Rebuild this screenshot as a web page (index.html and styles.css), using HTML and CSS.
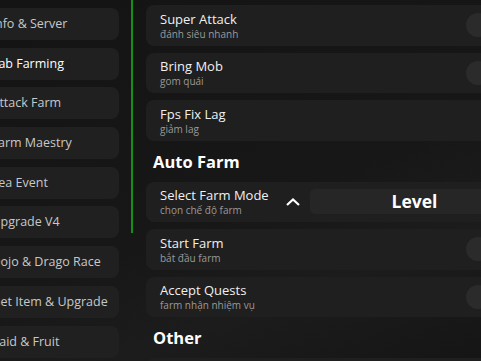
FILE: index.html
```html
<!DOCTYPE html>
<html lang="vi">
<head>
    <meta charset="UTF-8">
    <meta name="viewport" content="width=device-width, initial-scale=1.0">
    <title>Farm Hub</title>
    <link rel="stylesheet" href="styles.css">
</head>
<body>
    <div class="window">
        <div class="sidebar">
            <div class="tab">Info &amp; Server</div>
            <div class="tab active">Tab Farming</div>
            <div class="tab">Attack Farm</div>
            <div class="tab">Farm Maestry</div>
            <div class="tab">Sea Event</div>
            <div class="tab">Upgrade V4</div>
            <div class="tab">Dojo &amp; Drago Race</div>
            <div class="tab">Get Item &amp; Upgrade</div>
            <div class="tab">Raid &amp; Fruit</div>
        </div>

        <div class="divider"></div>

        <div class="content">
            <div class="row">
                <div class="row-text">
                    <div class="row-title">Super Attack</div>
                    <div class="row-sub">đánh siêu nhanh</div>
                </div>
                <div class="knob"></div>
            </div>
            <div class="row">
                <div class="row-text">
                    <div class="row-title">Bring Mob</div>
                    <div class="row-sub">gom quái</div>
                </div>
                <div class="knob"></div>
            </div>
            <div class="row">
                <div class="row-text">
                    <div class="row-title">Fps Fix Lag</div>
                    <div class="row-sub">giảm lag</div>
                </div>
            </div>

            <h2 class="section">Auto Farm</h2>

            <div class="row">
                <div class="row-text">
                    <div class="row-title">Select Farm Mode</div>
                    <div class="row-sub">chọn chế độ farm</div>
                </div>
                <svg class="chevron" width="14" height="8" viewBox="0 0 14 8">
                    <path d="M1 7 L7 1.5 L13 7" fill="none" stroke="#fff" stroke-width="2.2"/>
                </svg>
                <div class="dropdown">Level</div>
            </div>
            <div class="row">
                <div class="row-text">
                    <div class="row-title">Start Farm</div>
                    <div class="row-sub">bắt đầu farm</div>
                </div>
                <div class="knob"></div>
            </div>
            <div class="row">
                <div class="row-text">
                    <div class="row-title">Accept Quests</div>
                    <div class="row-sub">farm nhận nhiệm vụ</div>
                </div>
                <div class="knob"></div>
            </div>

            <h2 class="section">Other</h2>

            <div class="row"></div>
        </div>
    </div>
</body>
</html>
```

FILE: styles.css
```css
html, body {
    margin: 0;
    padding: 0;
    width: 481px;
    height: 361px;
    overflow: hidden;
}
body {
    font-family: "Open Sans", "DejaVu Sans", sans-serif;
    background: linear-gradient(160deg, #141414 0%, #171717 55%, #1c1c1c 75%, #151515 100%);
    color: #fff;
}
.window {
    display: flex;
    align-items: flex-start;
    height: 361px;
}
.sidebar {
    display: flex;
    flex-direction: column;
    gap: 7.7px;
    width: 139px;
    margin-left: -20px;
    padding-top: 8px;
    flex-shrink: 0;
}
.tab {
    height: 32px;
    line-height: 32px;
    background: #202020;
    border-radius: 8px;
    padding-left: 11.5px;
    font-size: 12.5px;
    font-weight: 500;
    color: #c8c8c8;
    white-space: nowrap;
    overflow: hidden;
}
.tab.active {
    color: #fff;
}
.divider {
    width: 2px;
    height: 233px;
    background: #139113;
    margin-left: 12px;
    flex-shrink: 0;
}
.content {
    display: flex;
    flex-direction: column;
    gap: 7px;
    margin-left: 13px;
    padding-top: 5px;
    width: 360px;
    flex-shrink: 0;
}
.row {
    height: 40.5px;
    background: #1f1f1f;
    border-radius: 8px;
    display: flex;
    align-items: center;
    padding-left: 14px;
    box-sizing: border-box;
}
.row-text {
    flex: 1;
    padding-top: 1px;
}
.row-title {
    font-size: 13px;
    font-weight: 500;
    color: #f0f0f0;
    line-height: 17px;
}
.row-sub {
    font-size: 10px;
    color: #9a9a9a;
    line-height: 13px;
}
.knob {
    width: 24px;
    height: 24px;
    border-radius: 50%;
    background: #2b2b2b;
    margin-right: 16px;
    flex-shrink: 0;
}
.section {
    margin: 0;
    height: 27px;
    line-height: 27px;
    padding-left: 7px;
    font-size: 16.5px;
    font-weight: 700;
    color: #fff;
}
.chevron {
    margin-right: 10px;
    flex-shrink: 0;
}
.dropdown {
    width: 209px;
    height: 25px;
    line-height: 25px;
    background: #262626;
    border-radius: 5px;
    text-align: center;
    font-size: 17.5px;
    font-weight: 700;
    margin-right: -13px;
    flex-shrink: 0;
}
```
